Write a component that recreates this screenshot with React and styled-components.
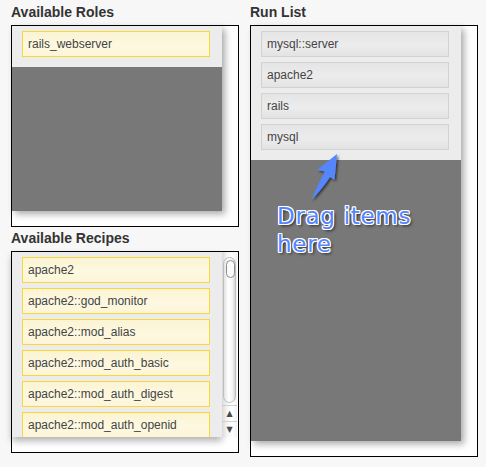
import styled, { createGlobalStyle } from 'styled-components';

const GlobalStyle = createGlobalStyle`
  html, body {
    margin: 0;
    padding: 0;
    background: #f7f7f7;
  }
  body {
    font-family: "Liberation Sans", Arial, Helvetica, sans-serif;
  }
`;

const Page = styled.div`
  display: grid;
  grid-template-columns: 228px 228px;
  column-gap: 11px;
  padding: 4px 0 0 11px;
`;

const Column = styled.div`
  display: flex;
  flex-direction: column;
`;

const Heading = styled.h2`
  margin: ${(props) => (props.second ? '3px' : '0')} 0 5px;
  font-size: 14px;
  line-height: 16px;
  font-weight: bold;
  color: #333;
`;

const Box = styled.div`
  position: relative;
  background: #fff;
  border: 1px solid #000;
  height: ${(props) => props.height}px;
`;

const Shelf = styled.div`
  width: 210px;
  height: ${(props) => props.height}px;
  background: #787878;
  box-shadow: 3px 3px 7px rgba(0, 0, 0, 0.35);
  overflow: hidden;
`;

const List = styled.ul`
  list-style: none;
  margin: 0;
  padding: 5px 12px 5px 10px;
  background: #ececec;
`;

const Item = styled.li`
  height: 24px;
  margin-bottom: 5px;
  padding-left: 5px;
  font-size: 12px;
  line-height: 24px;
  color: #444;
  border: 1px solid ${(props) => (props.gray ? '#d2d2d2' : '#f7d838')};
  background: ${(props) =>
    props.gray
      ? 'linear-gradient(#e5e5e5, #ececec 55%, #e3e3e3)'
      : 'linear-gradient(#fbf4d3, #fdf8e0 55%, #fcf5d8)'};
`;

const Scroller = styled.div`
  display: flex;
  height: 185px;
`;

const ScrollList = styled(Shelf)`
  background: #ececec;
  box-shadow: 0 4px 7px rgba(0, 0, 0, 0.3);
`;

const Track = styled.div`
  position: relative;
  z-index: 1;
  width: 15px;
  display: flex;
  flex-direction: column;
  background: linear-gradient(to right, #d9d9d9, #f6f6f6 35%, #fff 70%, #f2f2f2);
`;

const Thumb = styled.div`
  margin: 5px 1px 0 1px;
  height: 146px;
  border-radius: 7px;
  border: 1px solid #bdbdbd;
  background: linear-gradient(to right, #e2e2e2, #fff 40%, #f4f4f4 75%, #d6d6d6);
  box-sizing: border-box;
  position: relative;

  &::before {
    content: '';
    position: absolute;
    top: 2px;
    left: 2px;
    width: 7px;
    height: 16px;
    border: 1.5px solid #8d8d8d;
    border-radius: 5px;
    background: #fafafa;
  }
`;

const Spacer = styled.div`
  flex: 1;
`;

const ArrowButton = styled.div`
  height: 15px;
  border-top: 1px solid #cfcfcf;
  display: flex;
  align-items: center;
  justify-content: center;
  font-size: 8px;
  color: #4a4a4a;
  font-family: "DejaVu Sans", sans-serif;
`;

const Hint = styled.div`
  position: absolute;
  left: 26px;
  top: 176px;
  font-family: "DejaVu Sans", Verdana, sans-serif;
  font-size: 23px;
  line-height: 28px;
  letter-spacing: 0.7px;
  color: #5586ff;
  text-shadow:
    1px 0 0 #fff, -1px 0 0 #fff, 0 1px 0 #fff, 0 -1px 0 #fff,
    1px 1px 0 #fff, -1px -1px 0 #fff, 1px -1px 0 #fff, -1px 1px 0 #fff,
    2px 2px 3px rgba(0, 0, 0, 0.7);
`;

const HintArrow = styled.svg`
  position: absolute;
  left: 55px;
  top: 126px;
  overflow: visible;
`;

const roles = ['rails_webserver'];
const recipes = [
  'apache2',
  'apache2::god_monitor',
  'apache2::mod_alias',
  'apache2::mod_auth_basic',
  'apache2::mod_auth_digest',
  'apache2::mod_auth_openid',
];
const runList = ['mysql::server', 'apache2', 'rails', 'mysql'];

export default function App() {
  return (
    <>
      <GlobalStyle />
      <Page>
        <Column>
          <Heading>Available Roles</Heading>
          <Box height={200}>
            <Shelf height={185}>
              <List>
                {roles.map((r) => (
                  <Item key={r}>{r}</Item>
                ))}
              </List>
            </Shelf>
          </Box>
          <Heading second>Available Recipes</Heading>
          <Box height={200}>
            <Scroller>
              <ScrollList height={185}>
                <List>
                  {recipes.map((r) => (
                    <Item key={r}>{r}</Item>
                  ))}
                </List>
              </ScrollList>
              <Track>
                <Thumb />
                <Spacer />
                <ArrowButton>▲</ArrowButton>
                <ArrowButton>▼</ArrowButton>
              </Track>
            </Scroller>
          </Box>
        </Column>
        <Column>
          <Heading>Run List</Heading>
          <Box height={430}>
            <Shelf height={415}>
              <List>
                {runList.map((r) => (
                  <Item gray key={r}>{r}</Item>
                ))}
              </List>
            </Shelf>
            <HintArrow width="35" height="52" viewBox="0 0 35 52">
              <defs>
                <filter id="sh" x="-30%" y="-30%" width="160%" height="160%">
                  <feDropShadow dx="1.5" dy="1.5" stdDeviation="1.2" floodColor="#000" floodOpacity="0.6" />
                </filter>
              </defs>
              <path
                d="M31 2 L11 18 L19 19.5 Q12 32 5.5 48 Q17 36 24 25 L28.5 28 Z"
                fill="#5586ff"
                filter="url(#sh)"
              />
            </HintArrow>
            <Hint>
              Drag items
              <br />
              here
            </Hint>
          </Box>
        </Column>
      </Page>
    </>
  );
}
